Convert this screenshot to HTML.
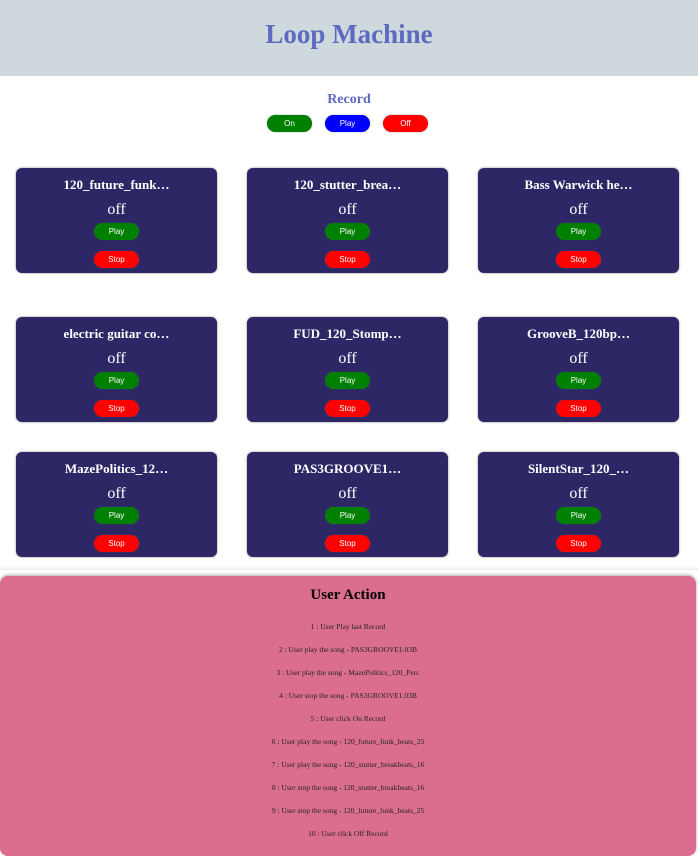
<!DOCTYPE html>
<html><head><style>
body{margin:0;width:698px;height:850px;overflow:hidden;background:#fff;font-family:"Liberation Serif",serif;position:relative}
.hdr{position:absolute;left:0;top:0;width:698px;height:76px;background:#cfd8dc;text-align:center}
.hdr h1{margin:0;line-height:68px;font-size:27px;color:#5c6bc0;font-weight:bold}
.rec{position:absolute;top:92px;left:0;width:698px;text-align:center;color:#5c6bc0;font-weight:bold;font-size:14px}
.btn{position:absolute;width:45px;height:17px;border-radius:9px;color:#fff;font-family:"Liberation Sans",sans-serif;font-size:8px;text-align:center;line-height:17px;box-shadow:0 0 1px #555}
.card{position:absolute;width:201px;height:105px;background:#2d2766;border-radius:6px;box-shadow:0 0 2px #888;color:#fff;text-align:center}
.card .t{position:absolute;top:9px;width:100%;font-weight:bold;font-size:13px}
.card .o{position:absolute;top:33px;width:100%;font-size:16px}
.card .btn{left:78px}
.panel{position:absolute;left:0;top:576px;width:696px;height:280px;background:#db6e8f;border-radius:8px;box-shadow:0 -1px 3px #aaa;text-align:center}
.panel h2{margin:0;position:absolute;top:11px;width:100%;font-size:15px}
.panel p{margin:0;position:absolute;width:100%;font-size:7.5px;color:#222}
.sep{position:absolute;left:0;top:566px;width:698px;height:4px;background:linear-gradient(#fff,#eee)}
</style></head><body>
<div class="hdr"><h1>Loop Machine</h1></div>
<div class="rec">Record</div>
<div class="btn" style="left:267px;top:115px;background:#008000">On</div>
<div class="btn" style="left:325px;top:115px;background:#0000ff">Play</div>
<div class="btn" style="left:383px;top:115px;background:#ff0000">Off</div>

<div class="card" style="left:16px;top:168px"><div class="t">120_future_funk…</div><div class="o">off</div><div class="btn" style="top:55px;background:#008000">Play</div><div class="btn" style="top:83px;background:#f00">Stop</div></div>
<div class="card" style="left:247px;top:168px"><div class="t">120_stutter_brea…</div><div class="o">off</div><div class="btn" style="top:55px;background:#008000">Play</div><div class="btn" style="top:83px;background:#f00">Stop</div></div>
<div class="card" style="left:478px;top:168px"><div class="t">Bass Warwick he…</div><div class="o">off</div><div class="btn" style="top:55px;background:#008000">Play</div><div class="btn" style="top:83px;background:#f00">Stop</div></div>

<div class="card" style="left:16px;top:317px"><div class="t">electric guitar co…</div><div class="o">off</div><div class="btn" style="top:55px;background:#008000">Play</div><div class="btn" style="top:83px;background:#f00">Stop</div></div>
<div class="card" style="left:247px;top:317px"><div class="t">FUD_120_Stomp…</div><div class="o">off</div><div class="btn" style="top:55px;background:#008000">Play</div><div class="btn" style="top:83px;background:#f00">Stop</div></div>
<div class="card" style="left:478px;top:317px"><div class="t">GrooveB_120bp…</div><div class="o">off</div><div class="btn" style="top:55px;background:#008000">Play</div><div class="btn" style="top:83px;background:#f00">Stop</div></div>

<div class="card" style="left:16px;top:452px"><div class="t">MazePolitics_12…</div><div class="o">off</div><div class="btn" style="top:55px;background:#008000">Play</div><div class="btn" style="top:83px;background:#f00">Stop</div></div>
<div class="card" style="left:247px;top:452px"><div class="t">PAS3GROOVE1…</div><div class="o">off</div><div class="btn" style="top:55px;background:#008000">Play</div><div class="btn" style="top:83px;background:#f00">Stop</div></div>
<div class="card" style="left:478px;top:452px"><div class="t">SilentStar_120_…</div><div class="o">off</div><div class="btn" style="top:55px;background:#008000">Play</div><div class="btn" style="top:83px;background:#f00">Stop</div></div>

<div class="sep"></div>
<div class="panel">
<h2>User Action</h2>
<p style="top:46px">1 : User Play last Record</p>
<p style="top:69px">2 : User play the song - PAS3GROOVE1.03B</p>
<p style="top:92px">3 : User play the song - MazePolitics_120_Perc</p>
<p style="top:115px">4 : User stop the song - PAS3GROOVE1.03B</p>
<p style="top:138px">5 : User click On Record</p>
<p style="top:161px">6 : User play the song - 120_future_funk_beats_25</p>
<p style="top:184px">7 : User play the song - 120_stutter_breakbeats_16</p>
<p style="top:207px">8 : User stop the song - 120_stutter_breakbeats_16</p>
<p style="top:230px">9 : User stop the song - 120_future_funk_beats_25</p>
<p style="top:253px">10 : User click Off Record</p>
</div>
</body></html>
